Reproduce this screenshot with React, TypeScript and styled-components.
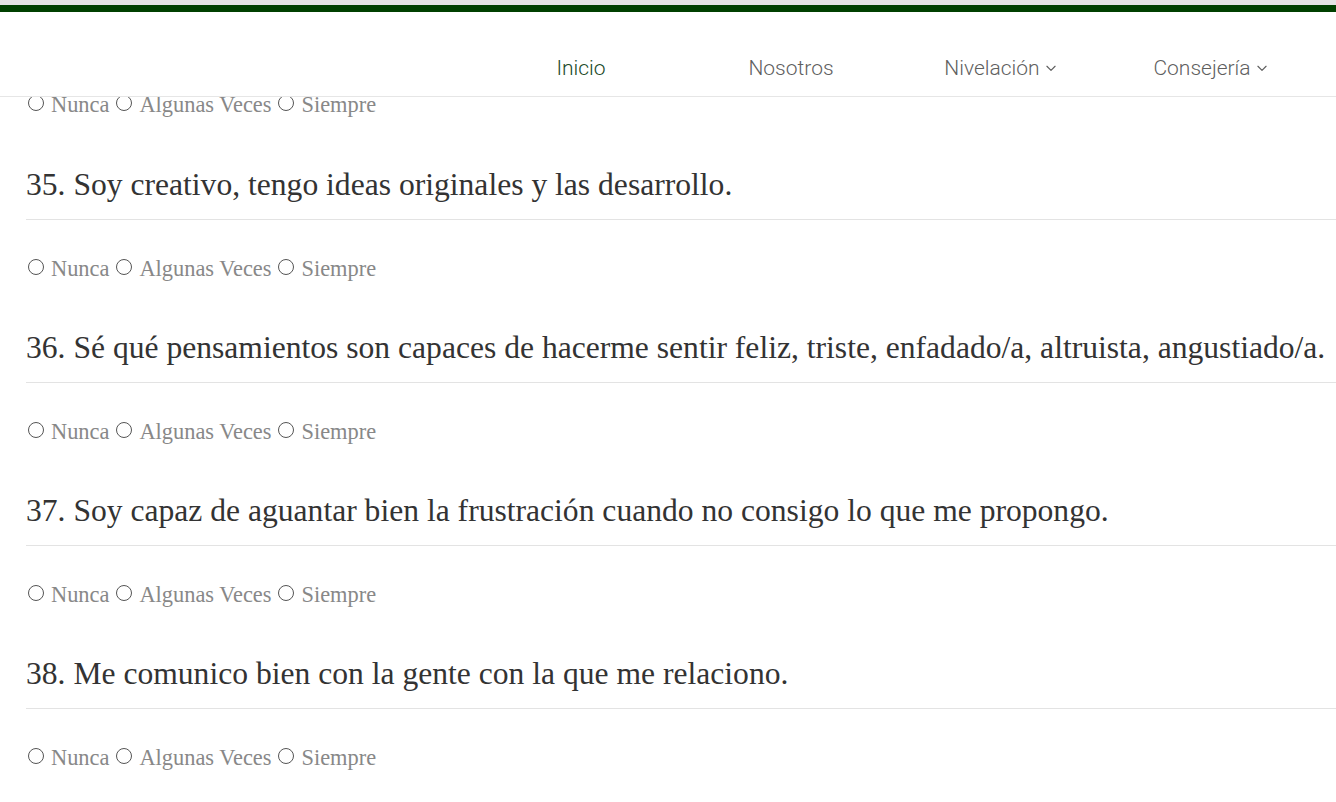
import React from 'react';
import styled, { createGlobalStyle } from 'styled-components';

const GlobalStyle = createGlobalStyle`
  html, body {
    margin: 0;
    padding: 0;
    background: #fff;
  }
  body {
    font-family: "Liberation Serif", "Times New Roman", serif;
    overflow: hidden;
  }
`;

const Page = styled.div`
  width: 1336px;
  height: 802px;
  position: relative;
  overflow: hidden;
`;

const TopBar = styled.header`
  position: absolute;
  top: 0;
  left: 0;
  right: 0;
  z-index: 10;
  background: #fff;
  border-top: 5px solid #e4e4e4;
`;

const GreenLine = styled.div`
  height: 7px;
  background: #004000;
`;

const Nav = styled.nav`
  height: 85px;
  border-bottom: 1px solid #e6e6e6;
  display: flex;
  justify-content: flex-end;
  align-items: center;
  padding: 28px 20px 0 0;
  box-sizing: border-box;
`;

const NavItem = styled.a<{ $active?: boolean }>`
  width: 210px;
  display: flex;
  justify-content: center;
  align-items: center;
  gap: 4px;
  font-family: Roboto, "Liberation Sans", sans-serif;
  font-weight: 300;
  font-size: 21px;
  color: ${(p) => (p.$active ? '#1b4a29' : '#5f5f5f')};
  text-decoration: none;
`;

const Content = styled.main`
  padding: 0 0 0 26px;
  margin-top: 93px;
`;

const Question = styled.h4`
  margin: 0;
  font-weight: 400;
  font-size: 31.6px;
  line-height: 36px;
  white-space: nowrap;
  color: #333;
  padding-bottom: 16px;
  border-bottom: 1px solid #e3e3e3;
`;

const Options = styled.div`
  display: flex;
  align-items: center;
  gap: 5px;
  margin: 37px 0 49px;
  font-size: 22.4px;
  line-height: 24px;
  color: #888;
`;

const FirstOptions = styled(Options)`
  margin-top: 0;
  margin-bottom: 50px;
`;

const Option = styled.label`
  display: inline-flex;
  align-items: center;
  gap: 7px;
  cursor: pointer;
`;

const Circle = styled.span`
  width: 16px;
  height: 16px;
  border: 1.3px solid #555;
  border-radius: 50%;
  box-sizing: border-box;
  display: inline-block;
  margin-left: 2px;
  transform: translateY(-2px);
`;

const answers = ['Nunca', 'Algunas Veces', 'Siempre'];

const questions = [
  { n: 35, text: 'Soy creativo, tengo ideas originales y las desarrollo.' },
  { n: 36, text: 'Sé qué pensamientos son capaces de hacerme sentir feliz, triste, enfadado/a, altruista, angustiado/a.' },
  { n: 37, text: 'Soy capaz de aguantar bien la frustración cuando no consigo lo que me propongo.' },
  { n: 38, text: 'Me comunico bien con la gente con la que me relaciono.' },
];

const Chevron = () => (
  <svg width="14" height="14" viewBox="0 0 24 24" fill="none" stroke="currentColor" strokeWidth="2" strokeLinecap="round" strokeLinejoin="round">
    <path d="m5 9 7 7 7-7" />
  </svg>
);

const Radios: React.FC<{ first?: boolean }> = ({ first }) => {
  const Row = first ? FirstOptions : Options;
  return (
    <Row>
      {answers.map((a) => (
        <Option key={a}>
          <Circle />
          {a}
        </Option>
      ))}
    </Row>
  );
};

const App: React.FC = () => {
  return (
    <Page>
      <GlobalStyle />
      <TopBar>
        <GreenLine />
        <Nav>
          <NavItem $active>Inicio</NavItem>
          <NavItem>Nosotros</NavItem>
          <NavItem>
            Nivelación <Chevron />
          </NavItem>
          <NavItem>
            Consejería <Chevron />
          </NavItem>
        </Nav>
      </TopBar>
      <Content>
        <Radios first />
        {questions.map((q) => (
          <div key={q.n}>
            <Question>
              {q.n}. {q.text}
            </Question>
            <Radios />
          </div>
        ))}
      </Content>
    </Page>
  );
};

export default App;
